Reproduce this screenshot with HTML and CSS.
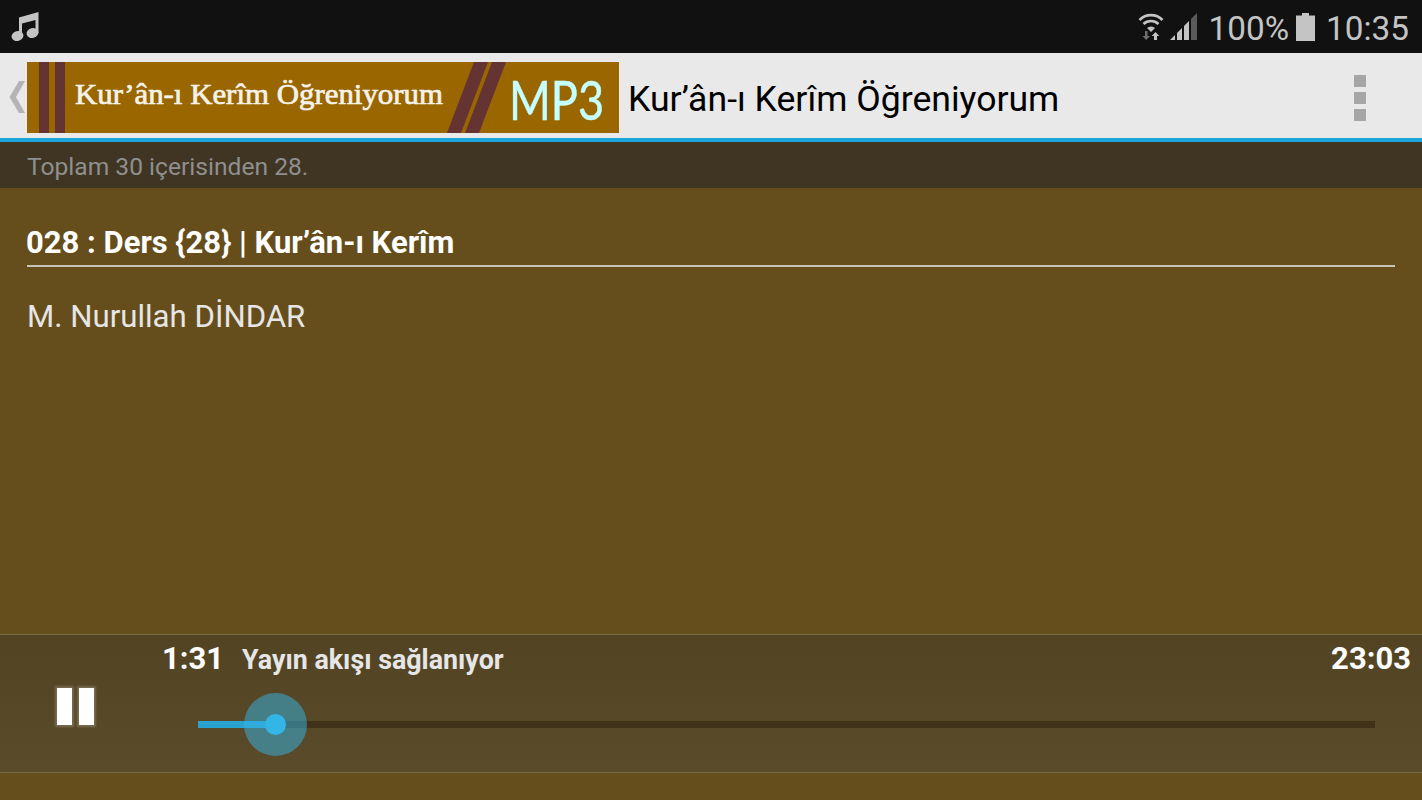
FILE: index.html
```html
<!DOCTYPE html>
<html lang="tr">
<head>
    <meta charset="UTF-8">
    <meta name="viewport" content="width=device-width, initial-scale=1.0">
    <title>Kur’ân-ı Kerîm Öğreniyorum</title>
    <link rel="stylesheet" href="styles.css">
</head>
<body>
    <div class="status-bar">
        <svg class="music-icon" width="30" height="30" viewBox="0 0 30 30">
            <path d="M9 6.500 L28.500 1 V22 H25.500 V9 L12 12.500 V25 H9 Z" fill="#c4c4c4"/>
            <ellipse cx="7.500" cy="25" rx="6" ry="4.800" fill="#c4c4c4" transform="rotate(-15 7.5 25)"/>
            <ellipse cx="22.500" cy="22" rx="6" ry="4.800" fill="#c4c4c4" transform="rotate(-15 22.5 22)"/>
        </svg>
        <div class="status-right">
            <svg class="wifi-icon" width="26" height="30" viewBox="0 0 26 30">
                <path d="M1.500 9 A16 16 0 0 1 24.500 9" fill="none" stroke="#c4c4c4" stroke-width="2.600"/>
                <path d="M5.500 13 A11 11 0 0 1 20.500 13" fill="none" stroke="#c4c4c4" stroke-width="2.600"/>
                <path d="M9 17 A6 6 0 0 1 17 17 L13 21 Z" fill="#c4c4c4"/>
                <path d="M7 20 H9.500 V25 H12 L8.200 29 L4.500 25 H7 Z" fill="#6e6e6e"/>
                <path d="M17.500 21 L21.300 25 H19 V29 H16 V25 H13.700 Z" fill="#c4c4c4"/>
            </svg>
            <svg class="signal-icon" width="28" height="28" viewBox="0 0 28 28">
                <path d="M0 27 L5 22 V27 Z" fill="#c4c4c4"/>
                <path d="M7 20 L12 15 V27 H7 Z" fill="#c4c4c4"/>
                <path d="M14 13 L19 8 V27 H14 Z" fill="#c4c4c4"/>
                <path d="M21 6 L27 0 V27 H21 Z" fill="#5a5a5a"/>
            </svg>
            <span class="battery-pct">100%</span>
            <svg class="battery-icon" width="19" height="28" viewBox="0 0 19 28">
                <path d="M6 0 H13 V2.500 H19 V28 H0 V2.500 H6 Z" fill="#c4c4c4"/>
            </svg>
            <span class="clock">10:35</span>
        </div>
    </div>

    <div class="action-bar">
        <svg class="back-icon" width="17" height="32" viewBox="0 0 17 32">
            <path d="M16 0 H10 L0.500 16 L10 32 H16 L7 16 Z" fill="#b4b4b4"/>
        </svg>
        <svg class="banner" width="592" height="71" viewBox="0 0 592 71">
            <rect width="592" height="71" fill="#996600"/>
            <rect x="12" width="10" height="71" fill="#663333"/>
            <rect x="28" width="10" height="71" fill="#663333"/>
            <path d="M447 0 H461 L434 71 H420 Z" fill="#663333"/>
            <path d="M465 0 H479 L452 71 H438 Z" fill="#663333"/>
            <text class="banner-title" x="48" y="42" textLength="368" lengthAdjust="spacingAndGlyphs">Kur’ân-ı Kerîm Öğreniyorum</text>
            <text class="banner-mp3" transform="translate(482 58) scale(0.82 1)">MP3</text>
        </svg>
        <h1 class="app-title">Kur’ân-ı Kerîm Öğreniyorum</h1>
        <div class="overflow-menu">
            <span></span>
            <span></span>
            <span></span>
        </div>
    </div>

    <div class="count-bar">Toplam 30 içerisinden 28.</div>

    <div class="content">
        <h2 class="lesson-title">028 : Ders {28} | Kur’ân-ı Kerîm</h2>
        <p class="lesson-author">M. Nurullah DİNDAR</p>
    </div>

    <div class="player">
        <div class="pause-btn">
            <span></span>
            <span></span>
        </div>
        <div class="player-main">
            <div class="player-info">
                <span class="time">1:31</span>
                <span class="player-status">Yayın akışı sağlanıyor</span>
                <span class="time time-total">23:03</span>
            </div>
            <div class="seekbar">
                <div class="seekbar-fill"></div>
                <div class="seekbar-halo"></div>
                <div class="seekbar-thumb"></div>
            </div>
        </div>
    </div>

    <div class="bottom-space"></div>
</body>
</html>
```

FILE: styles.css
```css
html, body {
    height: 100%;
}
body {
    font-family: Roboto, sans-serif;
    background-color: #654e1b;
    margin: 0;
    display: flex;
    flex-direction: column;
    overflow: hidden;
}

/* status bar */
.status-bar {
    height: 53px;
    background-color: #111111;
    display: flex;
    align-items: center;
    justify-content: space-between;
    padding: 0 13px 0 10px;
    color: #c4c4c4;
    flex-shrink: 0;
}
.music-icon {
    margin-top: -1px;
}
.status-right {
    display: flex;
    align-items: center;
}
.wifi-icon {
    margin: -2px 6px 0 0;
}
.signal-icon {
    margin-right: 11px;
}
.battery-pct, .clock {
    font-size: 33.3px;
    line-height: 53px;
    padding-top: 4px;
}
.battery-pct {
    margin-right: 7px;
}
.battery-icon {
    margin-right: 11px;
}

/* action bar */
.action-bar {
    height: 85px;
    background-color: #e9e9e9;
    border-bottom: 4px solid #1ba6dc;
    display: flex;
    align-items: center;
    padding-left: 9px;
    flex-shrink: 0;
}
.back-icon {
    margin: 3px 1px 0 0;
}
.banner {
    margin-top: 3px;
}
.banner-title {
    font-family: "Liberation Serif", serif;
    font-size: 29px;
    fill: #f5f2ea;
    stroke: #f5f2ea;
    stroke-width: 0.7px;
}
.banner-mp3 {
    font-family: Lato, sans-serif;
    font-size: 55px;
    fill: #c6ffff;
    stroke: #c6ffff;
    stroke-width: 0.5px;
}
.app-title {
    font-size: 35.6px;
    font-weight: 400;
    color: #000000;
    margin: 7px 0 0 9px;
    flex: 1;
}
.overflow-menu {
    display: flex;
    flex-direction: column;
    gap: 5px;
    margin: 5px 56px 0 0;
}
.overflow-menu span {
    width: 12px;
    height: 12px;
    background-color: #a6a6a6;
}

/* count */
.count-bar {
    height: 46px;
    line-height: 50px;
    background-color: #403522;
    color: #8f8f8f;
    font-size: 24.6px;
    padding-left: 27px;
    flex-shrink: 0;
}

/* lesson */
.content {
    height: 446px;
    padding: 0 27px;
    box-sizing: border-box;
    flex-shrink: 0;
}
.lesson-title {
    margin: 0;
    height: 79px;
    line-height: 110px;
    font-size: 31px;
    font-weight: 700;
    color: #ffffff;
    border-bottom: 2px solid #c9c4b8;
    box-sizing: border-box;
    text-indent: -1px;
}
.lesson-author {
    margin: 29px 0 0;
    font-size: 31.2px;
    line-height: 42px;
    color: #e6e6e6;
}

/* player */
.player {
    height: 139px;
    box-sizing: border-box;
    border-top: 1px solid #7a6b48;
    border-bottom: 1px solid #7a6b48;
    background: linear-gradient(#524322, #5a4b2a);
    display: flex;
    flex-shrink: 0;
}
.pause-btn {
    width: 55px;
    margin-left: 57px;
    display: flex;
    gap: 7px;
    padding-top: 53px;
    box-sizing: border-box;
}
.pause-btn span {
    width: 15px;
    height: 37px;
    background-color: #ffffff;
    box-shadow: 0 0 2px 2px rgba(255, 255, 255, 0.2);
}
.player-main {
    flex: 1;
    padding-left: 50px;
}
.player-info {
    display: flex;
    align-items: baseline;
    padding: 4px 11px 0 0;
}
.time {
    font-size: 31px;
    font-weight: 700;
    line-height: 40px;
    color: #ffffff;
}
.player-status {
    font-size: 26.8px;
    font-weight: 700;
    color: #e6e6e6;
    margin-left: 18px;
}
.time-total {
    margin-left: auto;
}
.seekbar {
    position: relative;
    height: 7px;
    background-color: #3f3219;
    margin: 42px 47px 0 36px;
}
.seekbar-fill {
    width: 78px;
    height: 100%;
    background-color: #2aa3d0;
}
.seekbar-halo {
    position: absolute;
    left: 46px;
    top: -28px;
    width: 63px;
    height: 63px;
    border-radius: 50%;
    background-color: rgba(51, 181, 229, 0.5);
}
.seekbar-thumb {
    position: absolute;
    left: 67px;
    top: -7px;
    width: 21px;
    height: 21px;
    border-radius: 50%;
    background-color: #33b5e5;
}
.bottom-space {
    flex: 1;
}
```
